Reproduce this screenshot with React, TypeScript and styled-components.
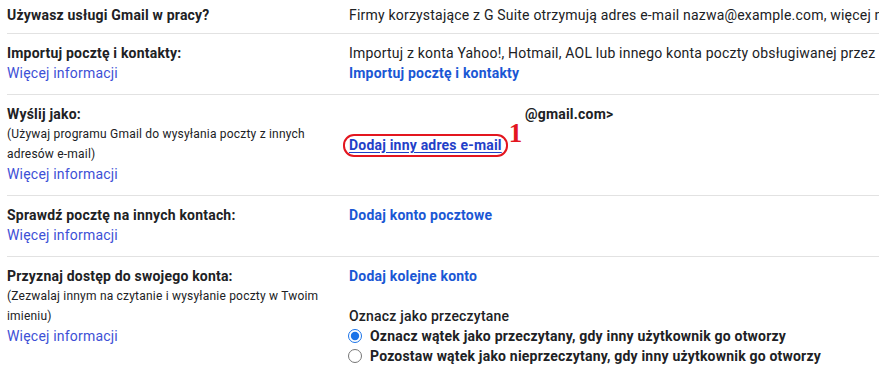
import * as React from 'react';
import styled, { createGlobalStyle } from 'styled-components';

const GlobalStyle = createGlobalStyle`
    html, body {
        margin: 0;
        background: #fff;
        overflow: hidden;
    }
    body {
        font-family: Roboto, "Liberation Sans", Arial, sans-serif;
        font-size: 14px;
        line-height: 20px;
        letter-spacing: 0.2px;
        color: #202124;
    }
`;

const Settings = styled.div`
    padding-left: 7px;
`;

const Row = styled.div<{ $first?: boolean; $last?: boolean }>`
    display: grid;
    grid-template-columns: 342px 1fr;
    padding: ${(p) => (p.$first ? '5px 0 8px' : '9px 0 11px')};
    border-bottom: ${(p) => (p.$last ? 'none' : '1px solid #e2e2e2')};
`;

const LabelCell = styled.div`
    display: flex;
    flex-direction: column;
`;

const ValueCell = styled.div`
    display: flex;
    flex-direction: column;
    white-space: nowrap;
    min-width: 0;
`;

const Title = styled.div`
    font-weight: 700;
`;

const Hint = styled.div`
    font-size: 12px;
    line-height: 20px;
    max-width: 335px;
`;

const MoreLink = styled.a`
    color: #3d50d6;
    text-decoration: none;
    cursor: pointer;
`;

const ActionLink = styled.a`
    color: #1a57d4;
    font-weight: 700;
    text-decoration: none;
    cursor: pointer;
`;

const PlainText = styled.div`
    white-space: nowrap;
    overflow: hidden;
`;

const Address = styled.div`
    font-weight: 700;
    display: flex;
`;

const Redacted = styled.span<{ $width: number }>`
    display: inline-block;
    width: ${(p) => p.$width}px;
`;

const AddAddressLine = styled.div`
    margin-top: 10px;
    display: flex;
`;

const Highlight = styled.span`
    position: relative;
    display: inline-block;
    margin-left: -6px;
    padding: 0 4px;
    line-height: 19px;
    border: 2px solid #e3161f;
    border-radius: 11px;
`;

const UnderlinedLink = styled(ActionLink)`
    color: #1f40c8;
    text-decoration: underline;
    text-underline-offset: 2px;
`;

const Marker = styled.span`
    position: absolute;
    left: 100%;
    top: -16px;
    margin-left: 3px;
    font-family: "Liberation Serif", "Times New Roman", serif;
    font-size: 27px;
    font-weight: 700;
    line-height: 27px;
    letter-spacing: 0;
    color: #e3161f;
`;

const Spacer = styled.div`
    height: 20px;
`;

const GroupTitle = styled.div`
    font-weight: 500;
`;

const RadioRow = styled.label`
    display: flex;
    align-items: center;
    font-weight: 700;
    height: 20px;
`;

const Radio = styled.input`
    width: 14px;
    height: 14px;
    margin: 0 8px 0 -1px;
    accent-color: #1a73e8;
`;

const App: React.FC = () => {
    const [markRead, setMarkRead] = React.useState(true);
    return (
        <>
            <GlobalStyle />
            <Settings>
                <Row $first>
                    <LabelCell>
                        <Title>Używasz usługi Gmail w pracy?</Title>
                    </LabelCell>
                    <ValueCell>
                        <PlainText>
                            Firmy korzystające z G Suite otrzymują adres e-mail nazwa@example.com, więcej n
                        </PlainText>
                    </ValueCell>
                </Row>
                <Row>
                    <LabelCell>
                        <Title>Importuj pocztę i kontakty:</Title>
                        <MoreLink>Więcej informacji</MoreLink>
                    </LabelCell>
                    <ValueCell>
                        <PlainText>
                            Importuj z konta Yahoo!, Hotmail, AOL lub innego konta poczty obsługiwanej przez
                        </PlainText>
                        <div>
                            <ActionLink>Importuj pocztę i kontakty</ActionLink>
                        </div>
                    </ValueCell>
                </Row>
                <Row>
                    <LabelCell>
                        <Title>Wyślij jako:</Title>
                        <Hint>(Używaj programu Gmail do wysyłania poczty z innych adresów e-mail)</Hint>
                        <MoreLink>Więcej informacji</MoreLink>
                    </LabelCell>
                    <ValueCell>
                        <Address>
                            <Redacted $width={176} />
                            @gmail.com&gt;
                        </Address>
                        <AddAddressLine>
                            <Highlight>
                                <UnderlinedLink>Dodaj inny adres e-mail</UnderlinedLink>
                                <Marker>1</Marker>
                            </Highlight>
                        </AddAddressLine>
                    </ValueCell>
                </Row>
                <Row>
                    <LabelCell>
                        <Title>Sprawdź pocztę na innych kontach:</Title>
                        <MoreLink>Więcej informacji</MoreLink>
                    </LabelCell>
                    <ValueCell>
                        <div>
                            <ActionLink>Dodaj konto pocztowe</ActionLink>
                        </div>
                    </ValueCell>
                </Row>
                <Row $last>
                    <LabelCell>
                        <Title>Przyznaj dostęp do swojego konta:</Title>
                        <Hint>(Zezwalaj innym na czytanie i wysyłanie poczty w Twoim imieniu)</Hint>
                        <MoreLink>Więcej informacji</MoreLink>
                    </LabelCell>
                    <ValueCell>
                        <div>
                            <ActionLink>Dodaj kolejne konto</ActionLink>
                        </div>
                        <Spacer />
                        <GroupTitle>Oznacz jako przeczytane</GroupTitle>
                        <RadioRow>
                            <Radio type="radio" name="mark" checked={markRead} onChange={() => setMarkRead(true)} />
                            Oznacz wątek jako przeczytany, gdy inny użytkownik go otworzy
                        </RadioRow>
                        <RadioRow>
                            <Radio type="radio" name="mark" checked={!markRead} onChange={() => setMarkRead(false)} />
                            Pozostaw wątek jako nieprzeczytany, gdy inny użytkownik go otworzy
                        </RadioRow>
                    </ValueCell>
                </Row>
            </Settings>
        </>
    );
};

export default App;
